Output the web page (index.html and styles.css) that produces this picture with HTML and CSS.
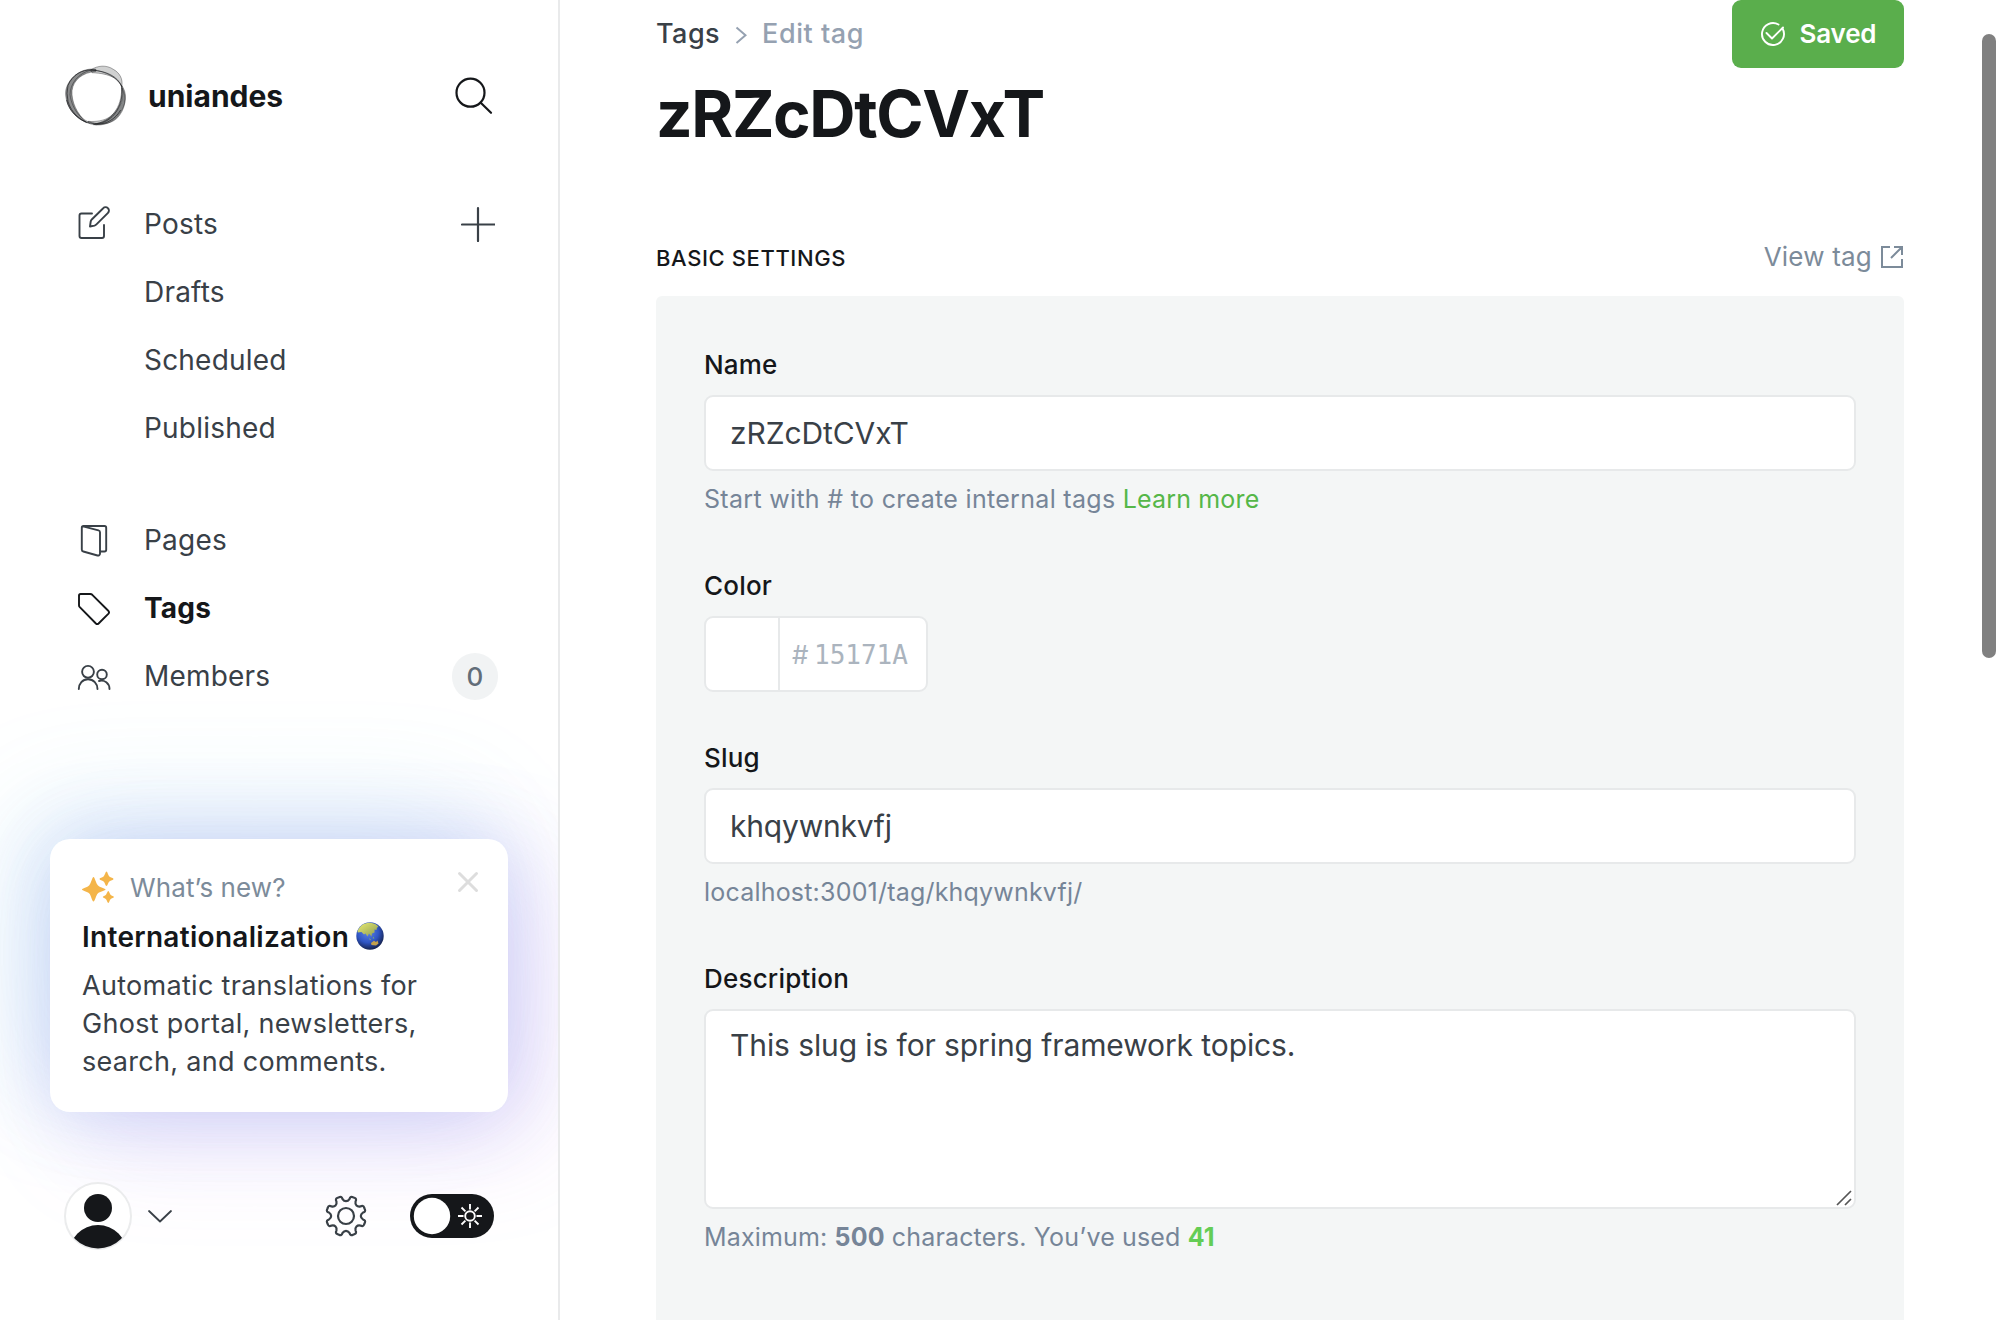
FILE: index.html
```html
<!DOCTYPE html>
<html lang="en">
<head>
<meta charset="utf-8">
<title>Tags - Edit tag</title>
<link rel="stylesheet" href="styles.css">
</head>
<body>
<div class="app">
  <nav class="sidebar">
    <header class="brand">
      <svg class="brand-logo" viewBox="12 12 192 192" width="64" height="64" fill="none" stroke="#15171a">
        <g fill="#15171a" stroke-width="2" stroke-opacity=".55">
          <path fill-opacity=".5" d="M108 28C70 22 28 48 18 88C12 125 34 168 80 188C50 160 34 125 36 92C40 60 66 38 108 34Z"/>
          <path fill-opacity=".2" d="M92 30C112 16 140 14 160 28C178 38 190 56 185 80C180 58 150 40 96 38Z"/>
          <path fill-opacity=".4" d="M185 76C202 100 200 130 180 160C160 190 128 198 100 194C138 186 170 166 184 128C190 108 190 92 185 76Z"/>
          <path fill-opacity=".2" d="M186 84C190 120 176 150 150 170C134 182 108 186 84 184C120 198 150 192 170 176C196 150 202 112 186 84Z"/>
        </g>
        <g stroke-width="2.500" stroke-opacity=".75">
          <path d="M24 76C38 44 66 28 96 30C140 34 172 48 185 80C190 120 174 170 128 188C84 200 38 172 24 124Q18 100 24 76Z"/>
          <path stroke-opacity=".5" d="M30 104C30 70 56 40 92 30C124 32 160 42 184 76C190 130 160 182 110 190C70 192 36 150 30 104Z"/>
          <path d="M20 120C26 156 62 190 108 194C140 192 166 178 182 150"/>
        </g>
      </svg>
      <span class="brand-name">uniandes</span>
      <svg class="search" viewBox="454 76 40 40" width="40" height="40" fill="none" stroke="#15171a" stroke-width="2.200" stroke-linecap="round"><circle cx="470.500" cy="92.700" r="14"/><path d="M481 103L491 112.800"/></svg>
    </header>

    <ul class="menu">
      <li class="item">
        <svg viewBox="76 206 36 36" width="36" height="36" class="icon"><path d="M92 213.500H81.500a2 2 0 0 0-2 2V236a2 2 0 0 0 2 2H102a2 2 0 0 0 2-2V225"/><path d="M90 226.500L90.700 221.500Q91 220.300 92 219.200L103.200 208.200A3.200 3.200 0 0 1 108 212.800L96.700 224.200Q95.700 225.200 94.500 225.600Z"/></svg>
        <span>Posts</span>
        <svg class="plus" viewBox="461 207 34 36" width="34" height="36"><path d="M462 225.500H494.500M478 209V242"/></svg>
      </li>
      <li class="item sub">Drafts</li>
      <li class="item sub">Scheduled</li>
      <li class="item sub">Published</li>
    </ul>
    <ul class="menu menu-second">
      <li class="item">
        <svg viewBox="76 522 36 36" width="36" height="36" class="icon"><path d="M101 551.500H104.500a1.700 1.700 0 0 0 1.700-1.700V527.700a1.700 1.700 0 0 0-1.700-1.700H83.500a1.700 1.700 0 0 0-1.700 1.700V549.500a2 2 0 0 0 1.500 2L97.500 555.500A2 2 0 0 0 100 553.700V532.200a2 2 0 0 0-1.500-1.900L83 526.300"/></svg>
        <span>Pages</span>
      </li>
      <li class="item active">
        <svg viewBox="76 590 36 36" width="36" height="36" class="icon"><path d="M79 605V595.600a1.600 1.600 0 0 1 1.600-1.600H90.300a3 3 0 0 1 2 .8L108.500 611a2 2 0 0 1 0 2.600L98.600 623.500a2 2 0 0 1-2.700 0L79.800 607.200A3 3 0 0 1 79 605Z"/></svg>
        <span>Tags</span>
      </li>
      <li class="item">
        <svg viewBox="76 658 36 36" width="36" height="36" class="icon"><circle cx="88" cy="671.800" r="5.900"/><path d="M78.800 689C78.800 683.500 82.500 679.200 88 679.200S97.500 683.500 97.500 689"/><circle cx="102" cy="674.500" r="4.800"/><path d="M99 681C104.500 679.500 109.500 683.300 109.500 689"/></svg>
        <span>Members</span>
        <span class="badge">0</span>
      </li>
    </ul>

    <section class="news">
      <div class="news-head">
        <svg viewBox="82 872 32 32" width="32" height="32" fill="#f4b549"><path d="M93.500 878C94.700 878 96 884.500 97.800 886.200C99.500 888.300 105.500 889.300 105.500 890.500S99.500 892.500 97.800 894.500C96 896.300 94.900 902.500 93.500 902.500S91 896.300 89.300 894.500C87.500 892.500 82 891.700 82 890.500S87.500 888.300 89.300 886.200C91 884.500 92.200 878 93.500 878Z"/><path d="M106.500 872.500C107.500 872.500 108 876 109.300 877.500C110.700 878.800 113.500 879 113.500 880S110.700 881.300 109.300 882.600C108 884 107.500 887 106.500 887S105 884 103.600 882.600C102.300 881.300 99.500 881 99.500 880S102.300 878.800 103.600 877.500C105 876 105.500 872.500 106.500 872.500Z"/><path d="M108.300 892C109.200 892 109.500 894.500 110.500 895.700C111.500 896.800 114 897 114 898S111.500 899.200 110.500 900.200C109.500 901.300 109.200 904 108.300 904S107 901.300 106 900.200C105 899.200 102.800 899 102.800 898S105 896.800 106 895.700C107 894.500 107.400 892 108.300 892Z"/></svg>
        <span>What’s new?</span>
        <svg class="close" viewBox="457 872 22 22" width="22" height="22"><path d="M459.500 874.500L476.500 891.500M476.500 874.500L459.500 891.500"/></svg>
      </div>
      <h2 class="news-title">Internationalization
        <svg viewBox="0 0 28 28" width="28" height="28">
          <defs>
            <radialGradient id="sea" cx=".42" cy=".35" r=".65"><stop offset="0" stop-color="#5f86e6"/><stop offset=".6" stop-color="#2f55c4"/><stop offset="1" stop-color="#162452"/></radialGradient>
            <linearGradient id="land" x1="0" y1="0" x2="1" y2="1"><stop offset="0" stop-color="#e9ec72"/><stop offset="1" stop-color="#8a9a52"/></linearGradient>
          </defs>
          <circle cx="14" cy="14" r="13.700" fill="url(#sea)"/>
          <path fill="url(#land)" d="M1.500 9C4 3 9 .8 14 .8C18 1 21 2.500 22.500 5L21 5.500L20.500 8L18.500 7.500L18.500 10.500L16 11.500L15.500 14.500L13 11.500L11.500 14.500L9.500 11.500L8 12.500L5.500 10L1.800 10.500Z"/>
          <path fill="#c3a04d" d="M15 21L18 18.800L20 20L21.500 18.500L22.500 21.500L20 23.500L15.500 23Z"/>
          <path fill="#7fae6a" d="M13 16L15 17.500L14 18.500ZM17 14.500L18.500 16.500H16.800Z"/>
        </svg>
      </h2>
      <p class="news-body">Automatic translations for<br>Ghost portal, newsletters,<br>search, and comments.</p>
    </section>

    <footer class="user-bar">
      <svg viewBox="64 1182 68 68" width="68" height="68">
        <defs><clipPath id="avatar"><circle cx="98" cy="1216" r="32.500"/></clipPath></defs>
        <circle cx="98" cy="1216" r="33" fill="#fff" stroke="#ebeced" stroke-width="2"/>
        <g clip-path="url(#avatar)" fill="#15171a"><circle cx="98" cy="1208" r="14"/><circle cx="98" cy="1254" r="29"/></g>
      </svg>
      <svg class="chevron" viewBox="147 1206 26 20" width="26" height="20"><path d="M149 1211L160 1221.500L171 1211"/></svg>
      <svg class="gear" viewBox="-21 -21 42 42" width="42" height="42">
        <circle r="8"/>
        <path id="cog" d=""/>
      </svg>
      <svg viewBox="410 1194 84 44" width="84" height="44">
        <rect x="410" y="1194" width="84" height="44" rx="22" fill="#15171a"/>
        <circle cx="432" cy="1216" r="18.200" fill="#fff"/>
        <g fill="none" stroke="#fff" stroke-width="1.900"><circle cx="470" cy="1216" r="4.800"/><path d="M470 1204v5.500M470 1222.500v5.500M458 1216h5.500M476.500 1216h5.500M461.500 1207.500l3.900 3.900M474.600 1220.600l3.900 3.900M461.500 1224.500l3.900-3.900M474.600 1211.400l3.900-3.900"/></g>
      </svg>
    </footer>
  </nav>

  <main class="content">
    <header class="page-head">
      <div>
        <div class="crumbs"><span>Tags</span><svg viewBox="735 25 12 20" width="12" height="20"><path d="M736.500 27.500L745.500 35.200L736.500 43"/></svg><span class="current">Edit tag</span></div>
        <h1 class="title">zRZcDtCVxT</h1>
      </div>
      <button class="save"><svg viewBox="1759 21 26 26" width="26" height="26"><path d="M1777.500 24.500A11 11 0 1 0 1781.500 28.500"/><path d="M1765.500 33L1771 38.500L1782 27.500"/></svg>Saved</button>
    </header>

    <div class="section-head">
      <h4>Basic settings</h4>
      <a class="view">View tag<svg viewBox="1880 245 24 24" width="24" height="24"><path d="M1890 247H1882V267H1902V259M1894 247H1902V255M1902 247L1891 258"/></svg></a>
    </div>

    <section class="panel">
      <div class="field">
        <label>Name</label>
        <div class="input">zRZcDtCVxT</div>
        <p class="hint">Start with # to create internal tags <a>Learn more</a></p>
      </div>
      <div class="field">
        <label>Color</label>
        <div class="color"><span class="swatch"></span><span class="hash">#</span><span class="hex">15171A</span></div>
      </div>
      <div class="field">
        <label>Slug</label>
        <div class="input slug">khqywnkvfj</div>
        <p class="hint hint-url">localhost:3001/tag/khqywnkvfj/</p>
      </div>
      <div class="field">
        <label>Description</label>
        <div class="input area">This slug is for spring framework topics.<svg class="grip" viewBox="0 0 18 18" width="18" height="18"><path d="M2 16L16 2M10 16L16 10"/></svg></div>
        <p class="hint hint-count">Maximum: <b>500</b> characters. You’ve used <b class="ok">41</b></p>
      </div>
    </section>
  </main>
  <div class="scrollbar"></div>
</div>
<script src="icons.js"></script>
</body>
</html>
```

FILE: icons.js
```js
// Settings cog: eight rounded teeth as a smooth closed curve.
(function () {
  const pt = (r, deg) => {
    const a = deg * Math.PI / 180;
    return (r * Math.cos(a)).toFixed(2) + ' ' + (r * Math.sin(a)).toFixed(2);
  };
  let d = '';
  for (let i = 0; i < 8; i++) {
    const c = 22.5 + i * 45;
    d += (i ? 'L' : 'M') + pt(17.300, c - 11);
    d += 'Q' + pt(20.600, c - 10) + ' ' + pt(20, c - 2);
    d += 'L' + pt(20, c + 2);
    d += 'Q' + pt(20.600, c + 10) + ' ' + pt(17.300, c + 11);
    d += 'C' + pt(14.200, c + 16) + ' ' + pt(14.200, c + 29) + ' ' + pt(17.300, c + 34);
  }
  document.getElementById('cog').setAttribute('d', d + 'Z');
})();
```

FILE: styles.css
```css
* { box-sizing: border-box; }
body { margin: 0; font-family: Inter, sans-serif; color: #15171a; background: #fff; }
h1, h2, h4, p, ul { margin: 0; padding: 0; }
svg { display: block; flex: none; }

.app { position: relative; display: flex; width: 2000px; height: 1320px; overflow: hidden; }

/* Sidebar */
.sidebar { width: 560px; height: 1320px; border-right: 2px solid #e9eaeb; overflow: hidden; flex: none; display: flex; flex-direction: column; }
.brand { height: 190px; padding: 64px 64px 0; display: flex; align-items: flex-start; }
.brand-name { margin-left: 20px; line-height: 64px; font-size: 30px; font-weight: 700; flex: 1; }
.search { margin-top: 12px; }
.menu { list-style: none; padding: 0 60px 0 76px; }
.menu-second { margin-top: 44px; }
.item { height: 68px; display: flex; align-items: center; gap: 32px; font-size: 28px; letter-spacing: .2px; color: #394047; }
.item.sub { padding-left: 68px; }
.item.active { font-weight: 700; color: #15171a; }
.icon { fill: none; stroke: #394047; stroke-width: 1.900; stroke-linejoin: round; stroke-linecap: round; }
.active .icon { stroke: #15171a; }
.plus { margin-left: auto; margin-right: 3px; fill: none; stroke: #394047; stroke-width: 2.200; stroke-linecap: round; }
.badge { margin-left: auto; width: 46px; height: 47px; border-radius: 24px; background: #f1f3f4; color: #626d79; font-size: 26px; font-weight: 500; line-height: 48px; text-align: center; }

.news { margin: 129px 50px 0; width: 458px; height: 273px; padding: 28px 32px; border-radius: 20px; background: #fff;
  box-shadow: -30px -26px 120px rgba(95, 200, 230, .16), 32px 28px 110px rgba(190, 110, 240, .18), 0 0 80px rgba(80, 110, 225, .24); }
.news-head { display: flex; align-items: center; height: 40px; font-size: 26px; letter-spacing: .1px; color: #7c8b9a; }
.news-head span { margin-left: 16px; flex: 1; }
.close { margin: -10px -3px 0 0; fill: none; stroke: #ddd; stroke-width: 3; stroke-linecap: round; }
.news-title { display: flex; align-items: center; gap: 7px; margin-top: 6px; height: 48px; font-size: 28px; font-weight: 600; letter-spacing: .3px; }
.news-title svg { margin-top: -2px; }
.news-body { margin-top: 6px; font-size: 27px; line-height: 38px; letter-spacing: .3px; color: #394047; }

.user-bar { display: flex; align-items: center; margin-top: 70px; padding: 0 64px; height: 68px; }
.chevron { margin-left: 15px; fill: none; stroke: #394047; stroke-width: 1.800; stroke-linecap: round; stroke-linejoin: round; }
.gear { margin-left: auto; margin-right: 43px; fill: none; stroke: #394047; stroke-width: 2.200; stroke-linejoin: round; }

/* Content */
.content { width: 1440px; padding: 0 96px; }
.page-head { display: flex; justify-content: space-between; align-items: flex-start; height: 237px; }
.crumbs { display: flex; align-items: center; margin-top: 8px; height: 50px; font-size: 27px; font-weight: 500; letter-spacing: .45px; color: #394047; }
.crumbs svg { margin: 4px 15px 0 15px; fill: none; stroke: #95a1b1; stroke-width: 2; }
.current { color: #95a1b1; letter-spacing: .55px; }
.title { margin-top: 16px; font-size: 64px; line-height: 80px; font-weight: 700; letter-spacing: -1.370px; }
.save { display: flex; align-items: center; justify-content: center; gap: 14px; width: 172px; height: 68px; padding: 0 0 1px; border: 0; border-radius: 9px; background: #5aae4c; color: #fff; font: 600 26px Inter, sans-serif; letter-spacing: -.2px; }
.save svg { fill: none; stroke: #fff; stroke-width: 1.900; stroke-linecap: round; stroke-linejoin: round; }
.section-head { display: flex; justify-content: space-between; align-items: baseline; height: 59px; line-height: 40px; }
.section-head h4 { font-size: 22px; font-weight: 500; letter-spacing: .6px; text-transform: uppercase; }
.view { display: flex; align-items: center; gap: 8px; font-size: 26px; letter-spacing: .2px; color: #7c8b9a; }
.view svg { fill: none; stroke: #7c8b9a; stroke-width: 2; }

.panel { height: 1024px; padding: 48px; border-radius: 6px 6px 0 0; background: #f4f6f6; display: flex; flex-direction: column; gap: 45px; }
.field label { display: block; padding-top: 1px; margin-bottom: 10px; font-size: 26px; font-weight: 500; line-height: 40px; letter-spacing: .2px; }
.input { height: 76px; padding: 0 24px; border: 2px solid #e7e9ea; border-radius: 9px; background: #fff; font-size: 30px; line-height: 73px; letter-spacing: -.1px; color: #394047; }
.slug { letter-spacing: -.2px; }
.area { position: relative; height: 200px; line-height: 68px; letter-spacing: -.1px; }
.grip { position: absolute; right: 1px; bottom: 0; fill: none; stroke: #555; stroke-width: 1.700; }
.hint { padding-top: 8px; font-size: 25px; line-height: 41px; letter-spacing: .31px; color: #768598; }
.hint a { color: #55b748; letter-spacing: .15px; }
.hint-url { letter-spacing: .2px; }
.hint-count { letter-spacing: .15px; }
.hint .ok { color: #64cd55; }
.color { display: flex; align-items: center; width: 224px; height: 76px; border: 2px solid #e7e9ea; border-radius: 9px; background: #fff; color: #abb4be; font-size: 26px; }
.swatch { width: 74px; height: 72px; border-right: 2px solid #e7e9ea; }
.hash { margin-left: 12px; width: 22px; }
.hex { font-family: "DejaVu Sans Mono", monospace; padding-top: 1px; }

.scrollbar { position: absolute; left: 1982px; top: 34px; width: 14px; height: 624px; border-radius: 7px; background: #808080; }
```
